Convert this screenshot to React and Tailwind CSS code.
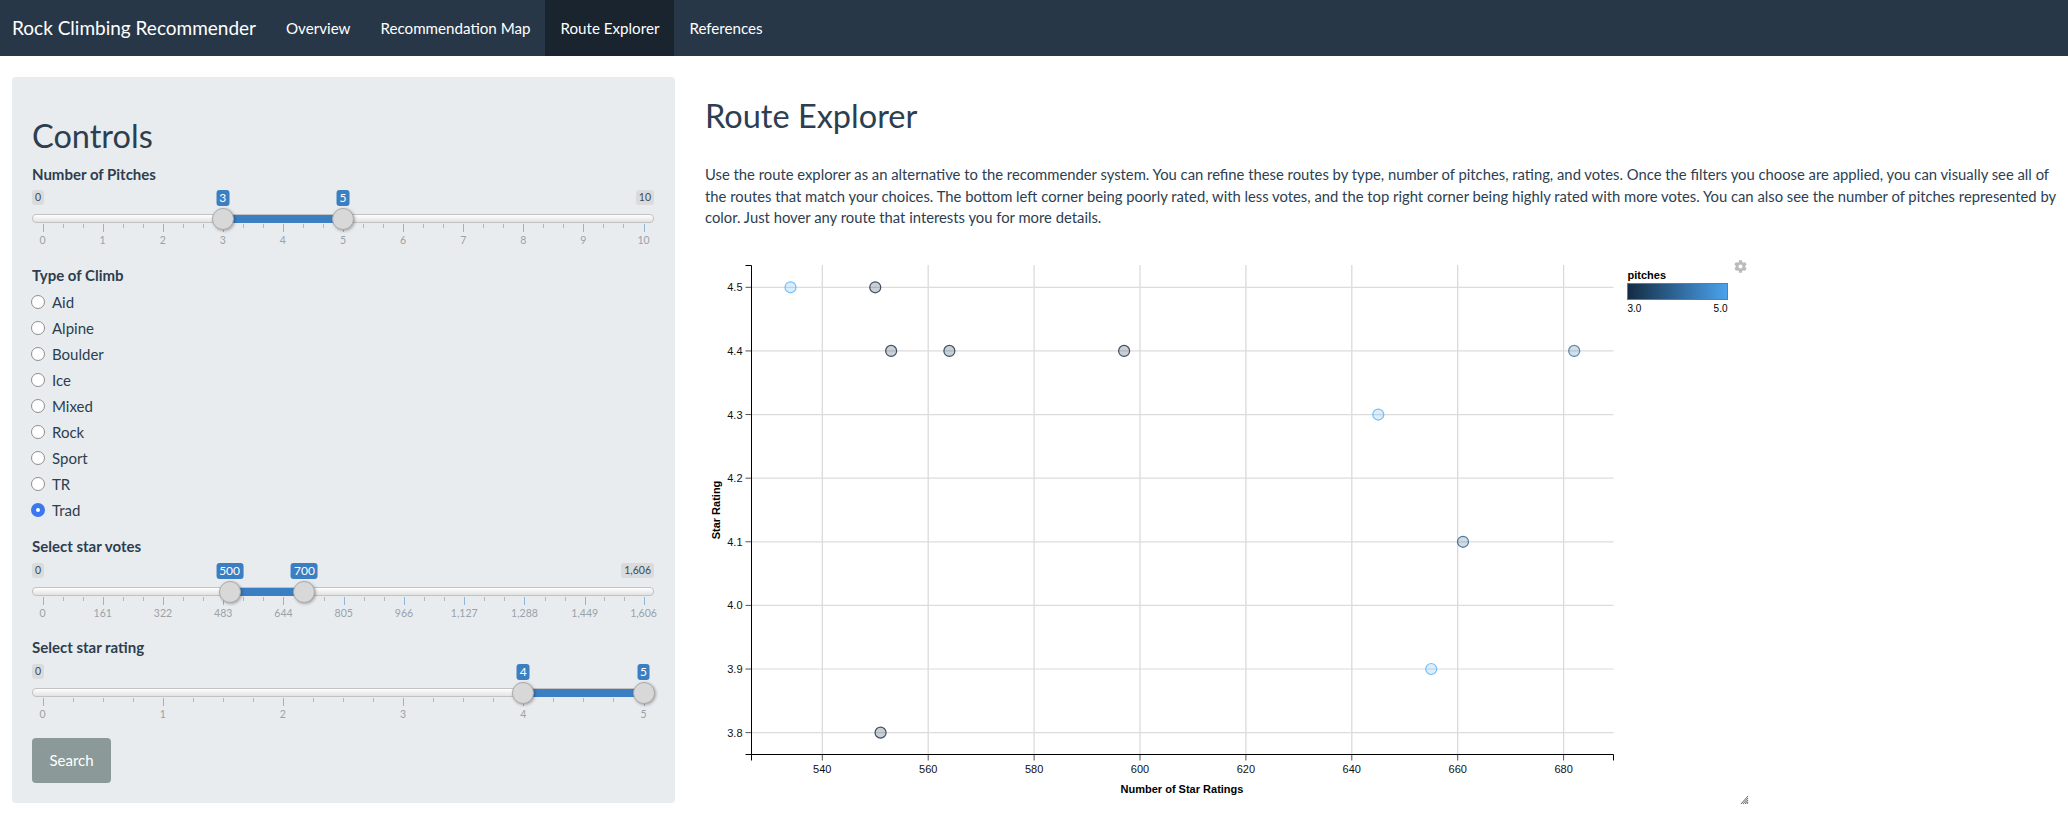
import { FaCog } from 'react-icons/fa'

const navItems = ['Overview', 'Recommendation Map', 'Route Explorer', 'References']
const climbTypes = ['Aid', 'Alpine', 'Boulder', 'Ice', 'Mixed', 'Rock', 'Sport', 'TR', 'Trad']

// slider track is 622px wide, ticks run 10px in from each side
const TRACK = 622
const PAD = 10.5

function Slider({ max, from, to, ticks, minor, maxLabel }) {
  const pos = (v) => PAD + (v / max) * (TRACK - PAD * 2)
  const minors = []
  for (let i = 0; i < ticks.length - 1; i++) {
    for (let j = 1; j < minor; j++) {
      minors.push(ticks[i] + ((ticks[i + 1] - ticks[i]) * j) / minor)
    }
  }
  const fmt = (v) => v.toLocaleString('en-US')

  return (
    <div className="relative h-[68px] w-[622px]">
      <span className="absolute left-0 top-0 h-[15px] rounded-[3px] bg-[#d9dbdc] px-[3px] text-[10.5px] leading-[15px] text-[#3c4a56]">0</span>
      {to !== max && (
        <span className="absolute right-0 top-0 h-[15px] rounded-[3px] bg-[#d9dbdc] px-[3px] text-[10.5px] leading-[15px] text-[#3c4a56]">{maxLabel || fmt(max)}</span>
      )}
      <div className="absolute left-0 top-[24px] h-[9px] w-full rounded-[4px] border border-[#c2c2c2] bg-gradient-to-b from-white to-[#e2e2e2]"></div>
      <div className="absolute top-[24.5px] h-[8px] bg-[#3b7ec2]" style={{ left: pos(from), width: pos(to) - pos(from) }}></div>

      {ticks.map((t) => (
        <div key={t}>
          <div className="absolute top-[34px] h-[8px] w-px bg-[#8fb5d8]" style={{ left: pos(t) }}></div>
          <span className="absolute top-[43px] -translate-x-1/2 text-[10.5px] leading-[15px] text-[#98a2a9]" style={{ left: pos(t) }}>{fmt(t)}</span>
        </div>
      ))}
      {minors.map((t) => (
        <div key={t} className="absolute top-[34px] h-[4px] w-px bg-[#b3b8bc]" style={{ left: pos(t) }}></div>
      ))}

      {[from, to].map((v) => (
        <div key={v}>
          <span className="absolute top-0 h-[16px] -translate-x-1/2 rounded-[3px] bg-[#3b7ec2] px-[3px] text-[12px] leading-[16px] text-white" style={{ left: pos(v) }}>{fmt(v)}</span>
          <div className="absolute top-[18px] h-[22px] w-[22px] -translate-x-1/2 rounded-full border border-[#ababab] bg-[#d8d8d8] shadow-[1px_1px_3px_rgba(0,0,0,0.3)]" style={{ left: pos(v) }}></div>
        </div>
      ))}
    </div>
  )
}

const xTicks = [540, 560, 580, 600, 620, 640, 660, 680]
const yTicks = [3.8, 3.9, 4.0, 4.1, 4.2, 4.3, 4.4, 4.5]
const xs = (v) => 822.3 + (v - 540) * 5.295
const ys = (v) => 287.3 + (4.5 - v) * 636.2

const routes = [
  { x: 534, y: 4.5, c: '#56b1f7' },
  { x: 550, y: 4.5, c: '#132b43' },
  { x: 553, y: 4.4, c: '#132b43' },
  { x: 564, y: 4.4, c: '#132b43' },
  { x: 597, y: 4.4, c: '#132b43' },
  { x: 682, y: 4.4, c: '#346e9d' },
  { x: 645, y: 4.3, c: '#56b1f7' },
  { x: 661, y: 4.1, c: '#2a5a82' },
  { x: 655, y: 3.9, c: '#56b1f7' },
  { x: 551, y: 3.8, c: '#132b43' },
]

function Chart() {
  return (
    <svg viewBox="705 240 1100 580" width="1100" height="580" className="block font-['Liberation_Sans',Arial,sans-serif]">
      <defs>
        <linearGradient id="pitches">
          <stop offset="0" stopColor="#132b43" />
          <stop offset="1" stopColor="#4ba3ee" />
        </linearGradient>
      </defs>

      {xTicks.map((t) => (
        <g key={t}>
          <line x1={xs(t)} x2={xs(t)} y1="265" y2="754.5" stroke="#d8d8d8" strokeWidth="1.2" />
          <line x1={xs(t)} x2={xs(t)} y1="754.5" y2="760.5" stroke="#555" />
          <text x={xs(t)} y="773" textAnchor="middle" fontSize="11" fill="#111">{t}</text>
        </g>
      ))}
      {yTicks.map((t) => (
        <g key={t}>
          <line x1="751.5" x2="1613.5" y1={ys(t)} y2={ys(t)} stroke="#dcdcdc" strokeWidth="1.2" />
          <line x1="745.5" x2="751.5" y1={ys(t)} y2={ys(t)} stroke="#555" />
          <text x="742.5" y={ys(t) + 4} textAnchor="end" fontSize="11" fill="#111">{t.toFixed(1)}</text>
        </g>
      ))}

      {/* axis lines */}
      <path d="M745.5 265.5H751.5V754.5H745.5" fill="none" stroke="#000" />
      <path d="M751.5 760.5V754.5H1613.5V760.5" fill="none" stroke="#000" />

      <text x="1182" y="793" textAnchor="middle" fontSize="11" fontWeight="700" fill="#000">Number of Star Ratings</text>
      <text transform="translate(720 510) rotate(-90)" textAnchor="middle" fontSize="11" fontWeight="700" fill="#000">Star Rating</text>

      {routes.map((r) => (
        <circle key={`${r.x}-${r.y}`} cx={xs(r.x)} cy={ys(r.y)} r="5.5" fill={r.c} fillOpacity="0.22" stroke={r.c} strokeOpacity="0.8" strokeWidth="1.2" />
      ))}

      {/* legend */}
      <text x="1627.5" y="279" fontSize="11" fontWeight="700" fill="#000">pitches</text>
      <rect x="1627.5" y="283.5" width="100" height="16" fill="url(#pitches)" stroke="#777" />
      <text x="1627.5" y="311.5" fontSize="10" fill="#000">3.0</text>
      <text x="1727.5" y="311.5" textAnchor="end" fontSize="10" fill="#000">5.0</text>

      {/* resize handle */}
      <g stroke="#222" strokeWidth="0.7">
        <path d="M1741 804L1748 796" />
        <path d="M1743 804L1748 798" />
        <path d="M1745 804L1748 800" />
        <path d="M1747 804L1748 802" />
      </g>
    </svg>
  )
}

export default function App() {
  return (
    <div className="relative h-[825px] overflow-hidden bg-white font-[Lato,sans-serif] text-[#2c3e50]">
      <nav className="flex h-[56px] items-center bg-[#283748] pl-3 text-white">
        <span className="mr-[15px] text-[19px] leading-[56px]">Rock Climbing Recommender</span>
        {navItems.map((item) => (
          <a key={item} className={`px-[15px] text-[15.15px] leading-[56px] ${item === 'Route Explorer' ? 'bg-[#1a242f]' : ''}`}>
            {item}
          </a>
        ))}
      </nav>

      <div className="flex">
        <aside className="ml-3 mt-[21px] h-[726px] w-[663px] rounded-[4px] bg-[#e9ecef] px-5 pt-[37px]">
          <h2 className="text-[32.5px] leading-[44px]">Controls</h2>
          <label className="mt-1 block text-[15px] font-bold leading-[24px]">Number of Pitches</label>
          <div className="mt-[4px]">
            <Slider max={10} from={3} to={5} ticks={[0, 1, 2, 3, 4, 5, 6, 7, 8, 9, 10]} minor={3} />
          </div>

          <label className="mt-[5px] block text-[15px] font-bold leading-[24px]">Type of Climb</label>
          <div className="mt-[2px]">
            {climbTypes.map((t) => (
              <div key={t} className="flex h-[26px] items-center text-[15px]">
                {t === 'Trad' ? (
                  <span className="ml-[-1px] flex h-[14px] w-[14px] items-center justify-center rounded-full bg-[#3b78f0]">
                    <span className="h-[4px] w-[4px] rounded-full bg-white"></span>
                  </span>
                ) : (
                  <span className="ml-[-1px] h-[14px] w-[14px] rounded-full border border-[#8e8e8e] bg-white"></span>
                )}
                <span className="ml-[7px]">{t}</span>
              </div>
            ))}
          </div>

          <label className="mt-[11px] block text-[15px] font-bold leading-[24px]">Select star votes</label>
          <div className="mt-[5px]">
            <Slider max={1606} from={500} to={700} ticks={[0, 161, 322, 483, 644, 805, 966, 1127, 1288, 1449, 1606]} minor={3} />
          </div>

          <label className="mt-[4px] block text-[15px] font-bold leading-[24px]">Select star rating</label>
          <div className="mt-[5px]">
            <Slider max={5} from={4} to={5} ticks={[0, 1, 2, 3, 4, 5]} minor={4} />
          </div>

          <button className="mt-[6px] block h-[45px] w-[79px] rounded-[4px] bg-[#8b9a98] text-[15px] text-white">Search</button>
        </aside>

        <main className="flex-1 pl-[30px] pr-[5px]">
          <h2 className="mt-[38px] text-[32.5px] leading-[44px]">Route Explorer</h2>
          <p className="mt-[26px] text-[14.8px] leading-[21.5px]">
            Use the route explorer as an alternative to the recommender system. You can refine these routes by type, number of pitches, rating, and votes. Once the filters you choose are applied, you can visually see all of the routes that match your choices. The bottom left corner being poorly rated, with less votes, and the top right corner being highly rated with more votes. You can also see the number of pitches represented by color. Just hover any route that interests you for more details.
          </p>
          <div className="relative mt-[11.5px]">
            <Chart />
            <FaCog className="absolute left-[1029px] top-[20px] h-[13px] w-[13px] text-[#bbbbbb]" />
          </div>
        </main>
      </div>
    </div>
  )
}
